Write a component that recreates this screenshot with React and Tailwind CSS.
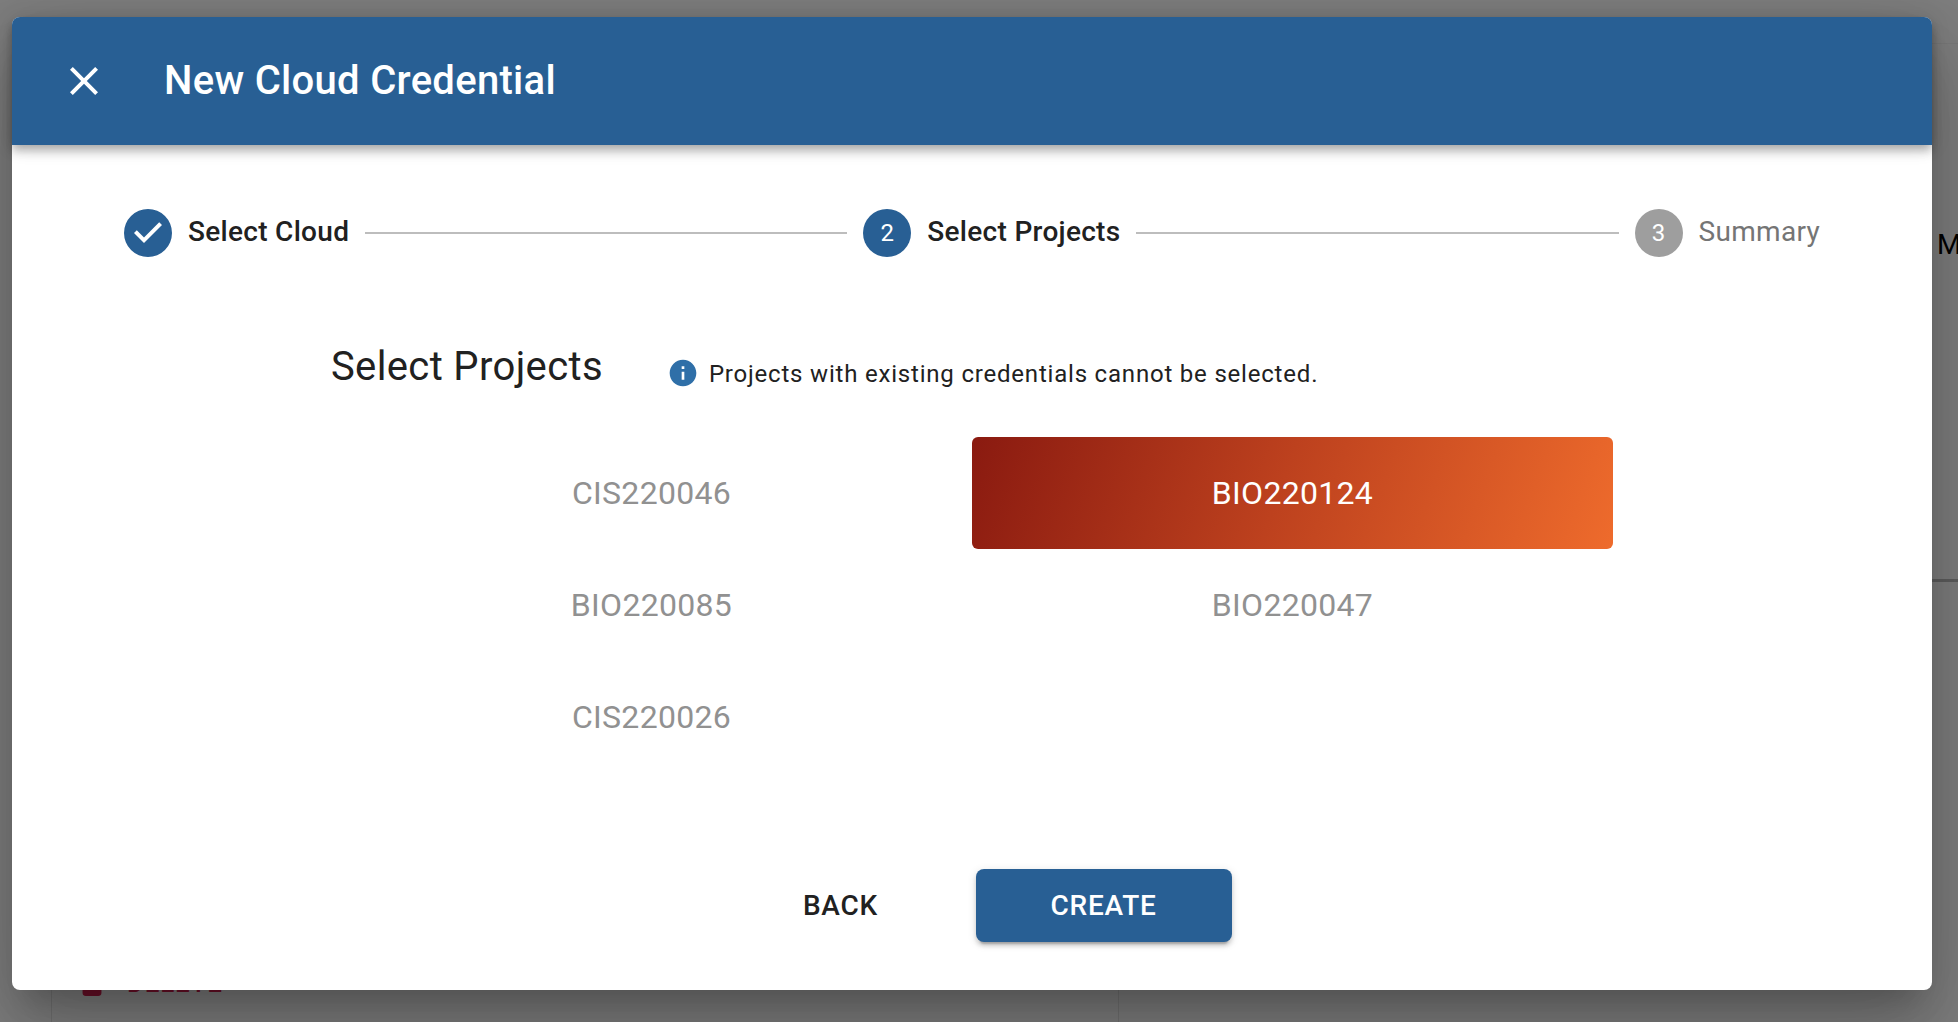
const STEP_CHECK =
  'M12 0a12 12 0 1 0 0 24 12 12 0 0 0 0-24zm-2 17l-5-5 1.4-1.4 3.6 3.6 7.6-7.6L19 8l-9 9z';

function Step({ number, label, done, active }) {
  const on = done || active;
  return (
    <div className="flex items-center px-4">
      {done ? (
        <svg className="size-12 text-[#285f94]" viewBox="0 0 24 24" fill="currentColor">
          <path d={STEP_CHECK} />
        </svg>
      ) : (
        <span
          className={
            'flex size-12 items-center justify-center rounded-full text-2xl leading-none text-white ' +
            (active ? 'bg-[#285f94]' : 'bg-[#9e9e9e]')
          }
        >
          {number}
        </span>
      )}
      <span
        className={
          'ml-4 text-[28px] leading-10 tracking-[0.3px] whitespace-nowrap -translate-y-px ' +
          (on ? 'font-medium text-[#212121]' : 'text-[#757575]')
        }
      >
        {label}
      </span>
    </div>
  );
}

function Connector() {
  return <div className="h-0.5 flex-1 bg-[#bdbdbd]" />;
}

function Project({ name, selected }) {
  return (
    <button
      className={
        'flex h-28 items-center justify-center rounded-md text-[32px] leading-[48px] tracking-[0.3px] ' +
        (selected
          ? 'bg-[linear-gradient(110deg,#8a1a10_0%,#bd411e_48%,#ee6b2c_100%)] text-white'
          : 'text-[#919191]')
      }
    >
      {name}
    </button>
  );
}

function Backdrop() {
  return (
    <div className="absolute inset-0 flex flex-col bg-[#7f7f7f]">
      <div className="ml-auto h-11 w-1/2 border-b border-[#7a7a7a]" />
      <div className="ml-auto flex h-[538px] w-1/2 items-start justify-end border-b-[3px] border-[#5e5e5e]">
        <span className="mt-[181px] w-[21px] overflow-hidden text-[28px] leading-10 text-black">M</span>
      </div>
      <div className="ml-[51px] flex w-[1068px] flex-1 items-end border-x border-[#737373] pb-[26px] pl-[29px]">
        <svg className="h-7 w-[22px]" viewBox="5 3 14 18" preserveAspectRatio="none" fill="#6e1029">
          <path d="M6 19c0 1.100.9 2 2 2h8c1.100 0 2-.9 2-2V7H6v12zM19 4h-3.500l-1-1h-5l-1 1H5v2h14V4z" />
        </svg>
        <span className="ml-6 translate-y-[2px] text-[26px] leading-[30px] font-medium tracking-[0.74px] text-[#6e1029]">
          DELETE
        </span>
      </div>
    </div>
  );
}

export default function App() {
  return (
    <div className="relative h-[1022px] w-[1958px] overflow-hidden pt-[17px] pl-3 font-[Roboto,sans-serif]">
      <Backdrop />
      <div className="relative flex h-[973px] w-[1920px] flex-col rounded-lg bg-white shadow-[0_22px_30px_-14px_rgba(0,0,0,0.2),0_48px_76px_6px_rgba(0,0,0,0.14),0_18px_92px_16px_rgba(0,0,0,0.12)]">
        <header className="flex h-32 shrink-0 items-center rounded-t-lg bg-[#285f94] pl-12 text-white shadow-[0_4px_8px_-2px_rgba(0,0,0,0.2),0_8px_10px_0_rgba(0,0,0,0.14),0_2px_20px_0_rgba(0,0,0,0.12)]">
          <svg className="size-12" viewBox="0 0 24 24" fill="currentColor">
            <path d="M19 6.410 17.590 5 12 10.590 6.410 5 5 6.410 10.590 12 5 17.590 6.410 19 12 13.410 17.590 19 19 17.590 13.410 12z" />
          </svg>
          <h1 className="ml-14 text-[40px] leading-[64px] font-medium tracking-[0.3px]">
            New Cloud Credential
          </h1>
        </header>

        <div className="mt-16 flex items-center px-24">
          <Step number={1} label="Select Cloud" done />
          <Connector />
          <Step number={2} label="Select Projects" active />
          <Connector />
          <Step number={3} label="Summary" />
        </div>

        <div className="mt-[78px] ml-[319px] flex h-16 items-center">
          <h2 className="text-[40px] leading-[64px] tracking-[0.36px] text-[#212121]">
            Select Projects
          </h2>
          <div className="mt-3 ml-16 flex items-center">
            <svg className="size-8 text-[#2f6fa8]" viewBox="0 0 24 24" fill="currentColor">
              <path d="M12 2C6.480 2 2 6.480 2 12s4.480 10 10 10 10-4.480 10-10S17.520 2 12 2zm1 15h-2v-6h2v6zm0-8h-2V7h2v2z" />
            </svg>
            <p className="ml-[10px] translate-y-px text-2xl leading-10 tracking-[0.8px] text-[#212121]">
              Projects with existing credentials cannot be selected.
            </p>
          </div>
        </div>

        <div className="mt-[38px] ml-[319px] grid w-[1282px] grid-cols-2">
          <Project name="CIS220046" />
          <Project name="BIO220124" selected />
          <Project name="BIO220085" />
          <Project name="BIO220047" />
          <Project name="CIS220026" />
        </div>

        <div className="mt-24 ml-[700px] flex text-[28px] leading-[49px] font-medium tracking-[0.8px]">
          <button className="h-[73px] w-64 rounded-lg pl-px text-[#212121]">BACK</button>
          <button className="ml-2 h-[73px] w-64 rounded-lg bg-[#285f94] pr-px text-white shadow-[0_6px_2px_-4px_rgba(0,0,0,0.2),0_4px_4px_0_rgba(0,0,0,0.14),0_2px_10px_0_rgba(0,0,0,0.12)]">
            CREATE
          </button>
        </div>
      </div>
    </div>
  );
}
